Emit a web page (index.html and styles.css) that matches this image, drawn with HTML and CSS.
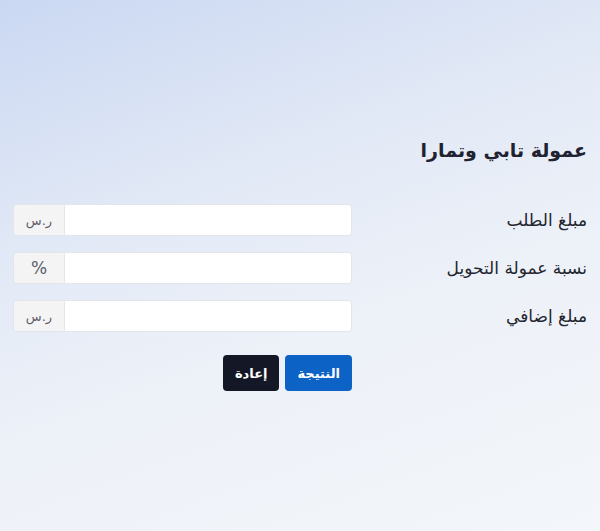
FILE: index.html
```html
<!DOCTYPE html>
<html lang="ar" dir="rtl">
<head>
  <meta charset="UTF-8">
  <meta name="viewport" content="width=device-width, initial-scale=1.0">
  <title>عمولة تابي وتمارا</title>
  <link rel="stylesheet" href="styles.css">
</head>
<body>
  <div class="calculator">
    <h1 class="title">عمولة تابي وتمارا</h1>
    <form class="calc-form" onsubmit="return false">
      <div class="field-row">
        <label class="field-label" for="amount">مبلغ الطلب</label>
        <div class="input-group">
          <input class="field-input" id="amount" type="text">
          <span class="addon">ر.س</span>
        </div>
      </div>
      <div class="field-row">
        <label class="field-label" for="rate">نسبة عمولة التحويل</label>
        <div class="input-group">
          <input class="field-input" id="rate" type="text">
          <span class="addon addon-pct">%</span>
        </div>
      </div>
      <div class="field-row">
        <label class="field-label" for="extra">مبلغ إضافي</label>
        <div class="input-group">
          <input class="field-input" id="extra" type="text">
          <span class="addon">ر.س</span>
        </div>
      </div>
      <div class="field-row">
        <span></span>
        <div class="actions">
          <button class="btn btn-primary" type="button">النتيجة</button>
          <button class="btn btn-dark" type="reset">إعادة</button>
        </div>
      </div>
    </form>
  </div>
</body>
</html>
```

FILE: styles.css
```css
html, body {
  height: 100%;
}
body {
  margin: 0;
  font-family: "DejaVu Sans", "Noto Sans", sans-serif;
  color: #1f2230;
  background: linear-gradient(160deg, #cad8f2 0%, #e2e9f6 35%, #edf1f8 60%, #f3f6fa 100%);
}
.calculator {
  padding: 136px 13px 0;
}
.title {
  margin: 0 0 40px;
  font-size: 19px;
  font-weight: 600;
  line-height: 28px;
}
.calc-form {
  display: flex;
  flex-direction: column;
  gap: 16px;
}
.field-row {
  display: grid;
  grid-template-columns: 1fr 339px;
  align-items: center;
}
.field-label {
  font-size: 17px;
  color: #23252f;
}
.input-group {
  display: flex;
  height: 32px;
}
.field-input {
  flex: 1;
  min-width: 0;
  margin: 0;
  border: 1px solid #e3e6ec;
  border-radius: 0 4px 4px 0;
  background: #fff;
  font-size: 15px;
}
.addon {
  width: 50px;
  display: flex;
  align-items: center;
  justify-content: center;
  border: 1px solid #e3e6ec;
  border-right: 0;
  border-radius: 4px 0 0 4px;
  background: #f4f4f5;
  color: #5b5f68;
  font-size: 13px;
}
.addon-pct {
  font-size: 17px;
}
.actions {
  display: flex;
  gap: 6px;
  margin-top: 7px;
}
.btn {
  height: 36px;
  padding: 0 12px;
  border: 0;
  border-radius: 4px;
  color: #fff;
  font-family: inherit;
  font-size: 13px;
  font-weight: 700;
  cursor: pointer;
}
.btn-primary {
  background: #0d62c6;
}
.btn-dark {
  background: #141826;
}
```
